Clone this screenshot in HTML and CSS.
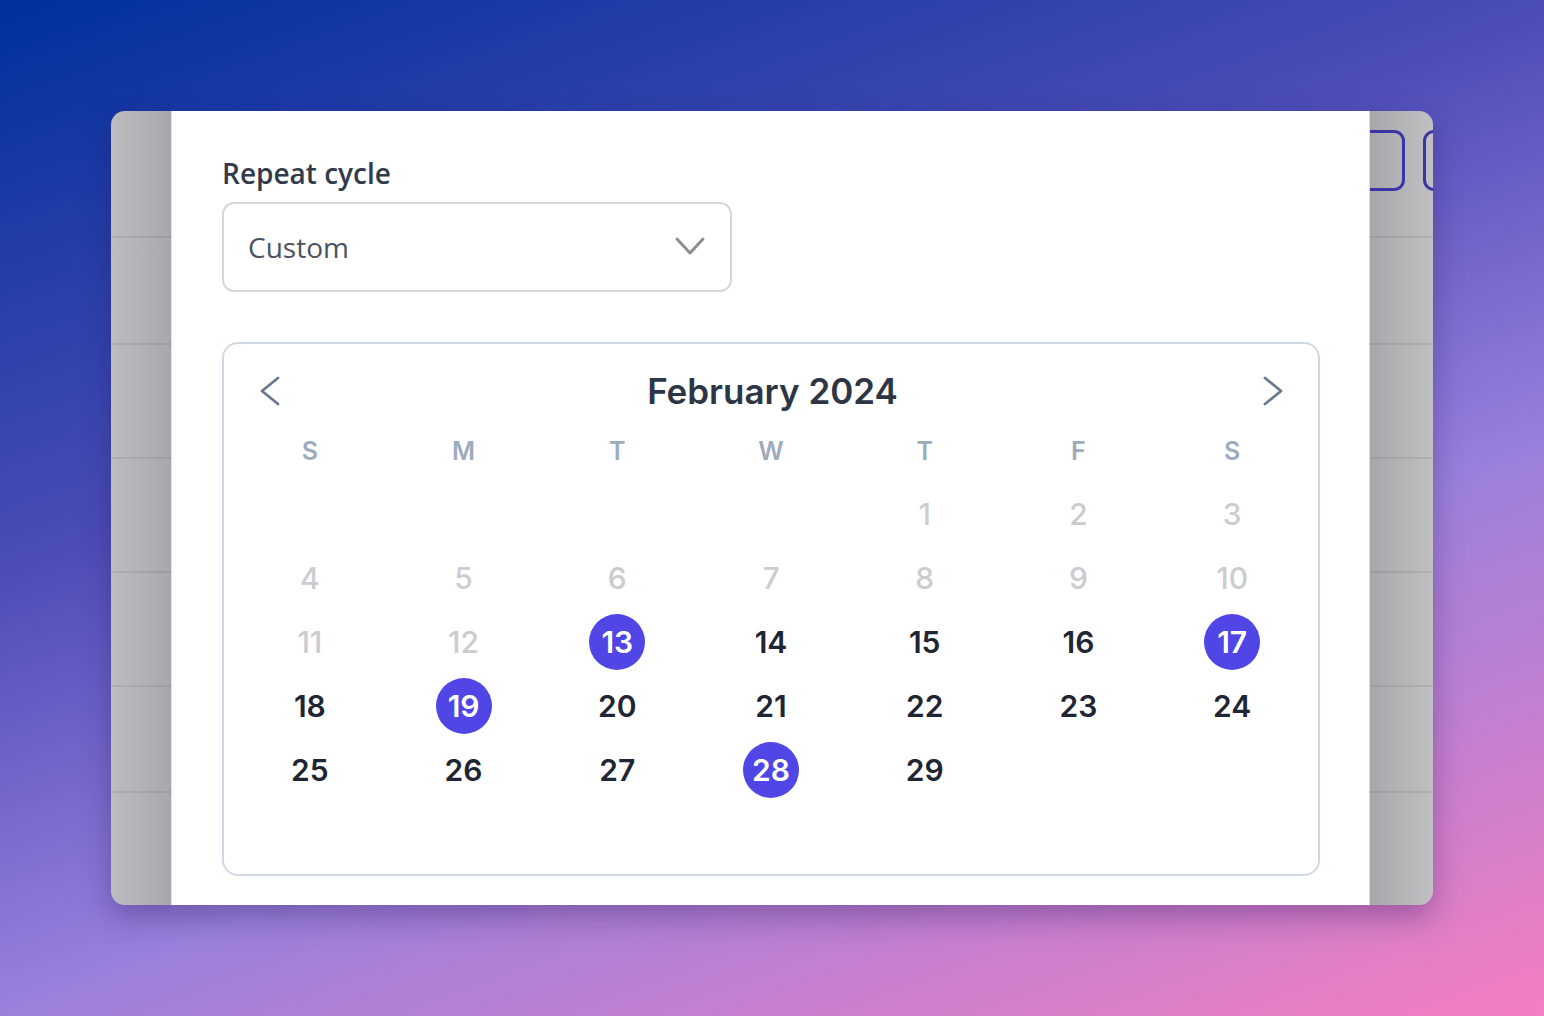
FILE: index.html
```html
<!DOCTYPE html>
<html lang="en">
<head>
<meta charset="utf-8">
<title>Repeat cycle</title>
<link rel="stylesheet" href="styles.css">
</head>
<body>
<div class="window">
  <div class="side side-left">
    <div class="row r1"></div>
    <div class="row r2"></div>
    <div class="row r3"></div>
    <div class="row r4"></div>
    <div class="row r5"></div>
    <div class="row r6"></div>
    <div class="row r7"></div>
  </div>

  <div class="modal">
    <div class="field-label">Repeat cycle</div>
    <div class="select">
      <span class="select-value">Custom</span>
      <svg class="select-chevron" width="32" height="20" viewBox="0 0 32 20"><path d="M3 3 L16 17 L29 3" fill="none" stroke="#8e8e8e" stroke-width="3" stroke-linecap="round" stroke-linejoin="round"/></svg>
    </div>

    <div class="calendar">
      <div class="cal-header">
        <span class="nav"><svg width="32" height="32" viewBox="0 0 32 32"><path d="M24 3 L8 16 L24 29" fill="none" stroke="#6b788d" stroke-width="2.8" stroke-linecap="round" stroke-linejoin="round"/></svg></span>
        <div class="cal-title">February 2024</div>
        <span class="nav"><svg width="32" height="32" viewBox="0 0 32 32"><path d="M8 3 L24 16 L8 29" fill="none" stroke="#6b788d" stroke-width="2.8" stroke-linecap="round" stroke-linejoin="round"/></svg></span>
      </div>
      <div class="weekdays">
        <span>S</span><span>M</span><span>T</span><span>W</span><span>T</span><span>F</span><span>S</span>
      </div>
      <div class="days">
        <span class="day"></span><span class="day"></span><span class="day"></span><span class="day"></span>
        <span class="day off">1</span><span class="day off">2</span><span class="day off">3</span>
        <span class="day off">4</span><span class="day off">5</span><span class="day off">6</span><span class="day off">7</span><span class="day off">8</span><span class="day off">9</span><span class="day off">10</span>
        <span class="day off">11</span><span class="day off">12</span><span class="day"><b class="sel">13</b></span><span class="day">14</span><span class="day">15</span><span class="day">16</span><span class="day"><b class="sel">17</b></span>
        <span class="day">18</span><span class="day"><b class="sel">19</b></span><span class="day">20</span><span class="day">21</span><span class="day">22</span><span class="day">23</span><span class="day">24</span>
        <span class="day">25</span><span class="day">26</span><span class="day">27</span><span class="day"><b class="sel">28</b></span><span class="day">29</span>
      </div>
    </div>
  </div>

  <div class="side side-right">
    <div class="row r1">
      <div class="btn-row"><span class="ghost-btn first"></span><span class="ghost-btn"></span></div>
    </div>
    <div class="row r2"></div>
    <div class="row r3"></div>
    <div class="row r4"></div>
    <div class="row r5"></div>
    <div class="row r6"></div>
    <div class="row r7"></div>
  </div>
</div>
</body>
</html>
```

FILE: styles.css
```css
* { box-sizing: border-box; }

html, body {
  margin: 0;
  height: 100%;
}

body {
  width: 1544px;
  height: 1016px;
  overflow: hidden;
  background: linear-gradient(160deg, #00309b 0%, #4b4cb7 36%, #9a80dc 64%, #f47ec0 100%);
  padding: 111px 0 0 111px;
  font-family: "Open Sans", "Noto Sans", sans-serif;
}

.window {
  width: 1322px;
  height: 794px;
  border-radius: 14px;
  overflow: hidden;
  display: flex;
  box-shadow: 0 12px 30px rgba(40, 20, 90, 0.35);
}

.side {
  display: flex;
  flex-direction: column;
  flex: none;
}

.side-left {
  width: 60px;
  background: linear-gradient(to right, #bdbdc1, #a8a8ac);
}

.side-right {
  width: 63px;
  background: linear-gradient(to right, #a8a8ac, #c0c0c2);
  overflow: hidden;
}

.row {
  border-bottom: 2px solid rgba(0, 0, 0, 0.07);
  flex: none;
}
.r1 { height: 127px; }
.r2 { height: 107px; }
.r3 { height: 114px; }
.r4 { height: 114px; }
.r5 { height: 114px; }
.r6 { height: 106px; }
.r7 { flex: 1; border-bottom: none; }

.btn-row {
  display: flex;
  gap: 18px;
  padding-top: 19px;
}

.ghost-btn {
  flex: none;
  width: 100px;
  height: 61px;
  border: 3px solid #3a34a6;
  border-radius: 11px;
}
.ghost-btn.first { margin-left: -65px; }

.modal {
  flex: none;
  width: 1199px;
  background: #ffffff;
  border-left: 1px solid #e1e2e5;
  border-right: 1px solid #dcdde0;
  padding: 42px 49px 0 50px;
}

.field-label {
  font-size: 28px;
  font-weight: 600;
  line-height: 40px;
  color: #323b4b;
  margin-bottom: 9px;
}

.select {
  width: 510px;
  height: 90px;
  border: 2px solid #d5d7dc;
  border-radius: 12px;
  display: flex;
  align-items: center;
  justify-content: space-between;
  padding: 0 24px 0 24px;
}

.select-value {
  font-size: 28px;
  color: #4b5261;
}

.select-chevron { margin-top: -2px; }

.calendar {
  margin-top: 50px;
  width: 1098px;
  height: 534px;
  border: 2px solid #cfd9e5;
  border-radius: 16px;
  padding: 15px 9px 0 9px;
  font-family: Inter, "Noto Sans", sans-serif;
}

.cal-header {
  height: 64px;
  display: flex;
  align-items: center;
  justify-content: space-between;
  padding: 0 20px 0 21px;
}

.nav {
  display: flex;
  width: 32px;
  height: 32px;
}

.cal-title {
  font-size: 35px;
  font-weight: 600;
  color: #2e3646;
  margin-left: 2px;
}

.weekdays {
  display: grid;
  grid-template-columns: repeat(7, 1fr);
  height: 56px;
  align-items: center;
  text-align: center;
  font-size: 25px;
  font-weight: 600;
  color: #9dabbe;
  margin-bottom: 3px;
}

.days {
  display: grid;
  grid-template-columns: repeat(7, 1fr);
  grid-auto-rows: 64px;
}

.day {
  display: flex;
  align-items: center;
  justify-content: center;
  font-size: 30px;
  font-weight: 600;
  color: #1f2533;
}

.day.off {
  color: #cbcccf;
  font-weight: 500;
}

.sel {
  width: 56px;
  height: 56px;
  border-radius: 50%;
  background: #4f46e5;
  color: #ffffff;
  display: flex;
  align-items: center;
  justify-content: center;
  font-weight: 600;
}
```
